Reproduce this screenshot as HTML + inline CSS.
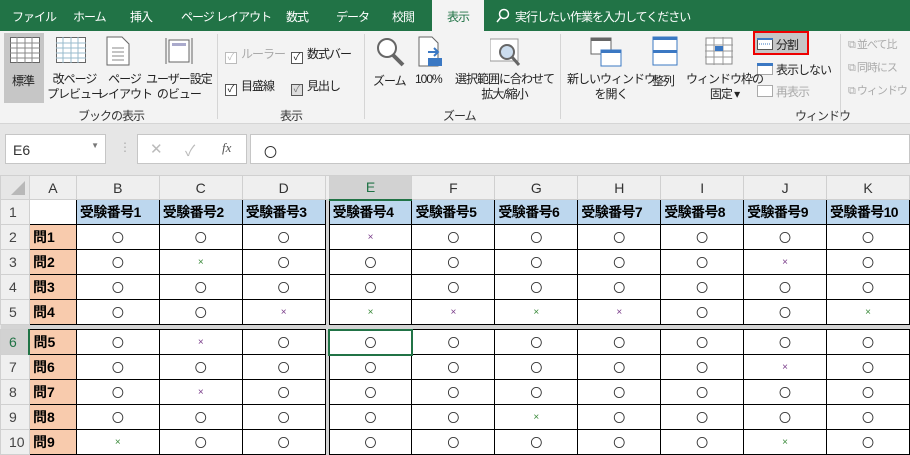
<!DOCTYPE html>
<html><head><meta charset="utf-8"><style>
*{margin:0;padding:0;box-sizing:border-box}
body{width:910px;height:454px;overflow:hidden;background:#e6e6e6;font-family:"Liberation Sans","Noto Sans CJK JP",sans-serif;position:relative}
.a{position:absolute;white-space:nowrap}
#tabs{left:0;top:0;width:910px;height:31px;background:#217346;color:#fff;font-size:12px;letter-spacing:-1px}
#tabs span{position:absolute;top:8px}
#rib{left:0;top:31px;width:910px;height:93px;background:#f3f3f3;border-bottom:1px solid #d5d5d5;font-size:12px;color:#222;letter-spacing:-1px}
.sep{position:absolute;top:3px;width:1px;height:85px;background:#d5d5d5}
.grp{position:absolute;top:76px;font-size:12px;color:#333}
.cb{display:inline-block;width:12px;height:12px;border:1px solid #555;background:#fff;vertical-align:-2px;margin-right:4px;font-size:10px;line-height:10px;text-align:center;letter-spacing:0}
table{position:absolute;left:0;top:175px;border-collapse:collapse;table-layout:fixed;font-size:12px;color:#333}
td{height:25px;border:1px solid #000;text-align:center;padding:0;overflow:hidden;white-space:nowrap;background:#fff}
tr.h td{height:24px;background:#efefef;border:1px solid #d0d0d0;color:#333;font-size:14px}
td.r{background:#efefef;border:1px solid #d0d0d0;color:#444;font-size:14px;text-align:left;padding-left:8px}
td.b{background:#bdd7ee;font-weight:bold;font-size:14px;color:#000;letter-spacing:-0.6px;text-align:left;padding-left:3px}
td.q{background:#f8cbad;font-weight:bold;text-align:left;padding-left:3px;font-size:14px;color:#000}
td.s{background:#d4d4d4;border:none;padding:0}
tr.sp td{height:5px;background:#d4d4d4;border:none}
.x{color:#7a3d8a;font-size:10px}
.g{color:#3a8a3a;font-size:10px}
</style></head><body>
<div id="tabs" class="a">
<span style="left:12px">ファイル</span><span style="left:73px">ホーム</span><span style="left:130px">挿入</span><span style="left:181px">ページ レイアウト</span><span style="left:286px">数式</span><span style="left:336px">データ</span><span style="left:392px">校閲</span>
<div class="a" style="left:432px;top:0;width:52px;height:31px;background:#f3f3f3;color:#217346;text-align:center;padding-top:8px">表示</div>
<svg class="a" style="left:496px;top:8px" width="14" height="16"><circle cx="8" cy="6" r="4.5" fill="none" stroke="#fff" stroke-width="1.5"/><path d="M5 9L1 14" stroke="#fff" stroke-width="1.5"/></svg><span style="left:515px">実行したい作業を入力してください</span>
</div>
<div id="rib" class="a">
<div class="a" style="left:4px;top:2px;width:40px;height:70px;background:#c6c6c6"></div>
<svg class="a" style="left:10px;top:6px" width="30" height="26"><rect x="0.5" y="0.5" width="29" height="25" fill="#fff" stroke="#666"/><path d="M0 6H30M0 11H30M0 16H30M0 21H30M7 0V26M15 0V26M22 0V26" stroke="#888"/></svg>
<svg class="a" style="left:56px;top:6px" width="30" height="26"><rect x="0.5" y="0.5" width="29" height="25" fill="#fff" stroke="#666"/><path d="M0 6H30M0 11H30M0 16H30M0 21H30M7 0V26M15 0V26M22 0V26" stroke="#9bc"/></svg>
<svg class="a" style="left:106px;top:5px" width="24" height="30"><path d="M1 1H16L23 8V29H1Z" fill="#fff" stroke="#666"/><path d="M6 12H18M6 16H18M6 20H18M6 24H18" stroke="#888"/></svg>
<svg class="a" style="left:164px;top:5px" width="30" height="30"><rect x="5" y="4" width="20" height="22" fill="#fff" stroke="#666"/><rect x="8" y="7" width="14" height="3" fill="#aac"/><path d="M2 2V28M28 2V28" stroke="#666"/></svg>
<div class="a" style="left:12px;top:41px">標準</div>
<div class="a" style="left:47px;top:41px;line-height:15px;text-align:center">改ページ<br>プレビュー</div>
<div class="a" style="left:97px;top:41px;line-height:15px;text-align:center">ページ<br>レイアウト</div>
<div class="a" style="left:146px;top:41px;line-height:15px;text-align:center">ユーザー設定<br>のビュー</div>
<div class="grp" style="left:78px">ブックの表示</div>
<div class="sep" style="left:217px"></div>
<div class="a" style="left:225px;top:14px;color:#aaa"><span class="cb" style="border-color:#bbb;color:#bbb">✓</span>ルーラー</div>
<div class="a" style="left:291px;top:14px"><span class="cb">✓</span>数式バー</div>
<div class="a" style="left:225px;top:46px"><span class="cb">✓</span>目盛線</div>
<div class="a" style="left:291px;top:46px"><span class="cb" style="background:#ddd;color:#777">✓</span>見出し</div>
<div class="grp" style="left:280px">表示</div>
<div class="sep" style="left:364px"></div>
<svg class="a" style="left:375px;top:6px" width="30" height="30"><circle cx="12" cy="11" r="9" fill="#fff" stroke="#666" stroke-width="2"/><path d="M18 18L28 28" stroke="#666" stroke-width="4"/></svg>
<svg class="a" style="left:418px;top:5px" width="28" height="32"><path d="M1 1H14L20 7V30H1Z" fill="#fff" stroke="#666"/><path d="M10 16H20M16 12L20 16L16 20" stroke="#3b78c3" stroke-width="2" fill="none"/><rect x="10" y="22" width="14" height="8" fill="#3b78c3"/></svg>
<div class="a" style="left:373px;top:41px">ズーム</div>
<div class="a" style="left:415px;top:41px">100%</div>
<svg class="a" style="left:490px;top:6px" width="32" height="30"><rect x="0" y="2" width="28" height="22" fill="#fff" stroke="#999"/><circle cx="17" cy="15" r="7" fill="#cde" stroke="#666" stroke-width="2"/><path d="M22 20L29 28" stroke="#666" stroke-width="3"/></svg>
<div class="a" style="left:455px;top:41px;line-height:15px;text-align:center">選択範囲に合わせて<br>拡大/縮小</div>
<div class="grp" style="left:443px">ズーム</div>
<div class="sep" style="left:560px"></div>
<svg class="a" style="left:590px;top:6px" width="32" height="30"><rect x="1" y="1" width="20" height="16" fill="#fff" stroke="#666"/><rect x="1" y="1" width="20" height="3" fill="#666"/><rect x="11" y="13" width="20" height="16" fill="#fff" stroke="#3b78c3"/><rect x="11" y="13" width="20" height="3" fill="#3b78c3"/></svg>
<div class="a" style="left:567px;top:41px;line-height:15px;text-align:center">新しいウィンドウ<br>を開く</div>
<svg class="a" style="left:652px;top:5px" width="26" height="30"><rect x="1" y="1" width="24" height="28" fill="#fff" stroke="#3b78c3"/><rect x="1" y="1" width="24" height="3" fill="#3b78c3"/><rect x="1" y="14" width="24" height="3" fill="#3b78c3"/></svg>
<div class="a" style="left:652px;top:41px">整列</div>
<svg class="a" style="left:705px;top:6px" width="28" height="28"><rect x="1" y="1" width="26" height="26" fill="#fff" stroke="#888"/><path d="M0 8H28M0 14H28M0 20H28M9 0V28M18 0V28" stroke="#999"/><rect x="10" y="9" width="8" height="5" fill="#3b78c3"/></svg>
<div class="a" style="left:686px;top:41px;line-height:15px;text-align:center">ウィンドウ枠の<br>固定 ▾</div>
<div class="a" style="left:753px;top:0px;width:56px;height:24px;border:2px solid #e00;background:#c6c6c6"></div>
<svg class="a" style="left:757px;top:7px" width="16" height="12"><rect x="0.5" y="0.5" width="15" height="11" fill="#fff" stroke="#555"/><rect x="0" y="0" width="16" height="2" fill="#3b78c3"/><path d="M2 6H14" stroke="#3b78c3" stroke-dasharray="1 1"/></svg>
<div class="a" style="left:776px;top:5px">分割</div>
<svg class="a" style="left:757px;top:32px" width="16" height="12"><rect x="0.5" y="0.5" width="15" height="11" fill="#fff" stroke="#555" stroke-dasharray="1 1"/><rect x="0" y="0" width="16" height="3" fill="#3b78c3"/></svg>
<div class="a" style="left:776px;top:30px">表示しない</div>
<svg class="a" style="left:757px;top:54px" width="16" height="12"><rect x="0.5" y="0.5" width="15" height="11" fill="#fff" stroke="#aaa"/></svg>
<div class="a" style="left:776px;top:52px;color:#aaa">再表示</div>
<div class="grp" style="left:795px">ウィンドウ</div>
<div class="sep" style="left:840px"></div>
<div class="a" style="left:848px;top:5px;color:#aaa;font-size:11px">⧉ 並べて比</div>
<div class="a" style="left:848px;top:28px;color:#aaa;font-size:11px">⧉ 同時にス</div>
<div class="a" style="left:848px;top:51px;color:#aaa;font-size:11px">⧉ ウィンドウ</div>
</div>
<div class="a" style="left:5px;top:134px;width:101px;height:30px;background:#fff;border:1px solid #c6c6c6;font-size:14px;padding:7px 0 0 7px;color:#333">E6<span style="position:absolute;right:6px;top:6px;font-size:8px;color:#777">▼</span></div>
<div class="a" style="left:119px;top:140px;color:#aaa;font-size:12px">⋮</div>
<div class="a" style="left:137px;top:134px;width:110px;height:30px;background:#fff;border:1px solid #c6c6c6;color:#bbb;font-size:15px;padding-top:5px"><span style="position:absolute;left:12px">✕</span><span style="position:absolute;left:47px">✓</span><span style="position:absolute;left:84px;color:#555;font-style:italic;font-family:'Liberation Serif',serif;font-size:13px">fx</span></div>
<div class="a" style="left:250px;top:134px;width:660px;height:30px;background:#fff;border:1px solid #c6c6c6;font-size:13px;padding:7px 0 0 13px;color:#333">〇</div>
<table>
<colgroup><col style="width:29px"><col style="width:47px"><col style="width:83px"><col style="width:83px"><col style="width:83px"><col style="width:4px"><col style="width:83px"><col style="width:83px"><col style="width:83px"><col style="width:83px"><col style="width:83px"><col style="width:83px"><col style="width:83px"></colgroup>
<tr class="h"><td style="background:#e6e6e6"><svg width="20" height="18" style="display:block;margin-left:6px"><path d="M18 2V16H4Z" fill="#b8b8b8"/></svg></td><td>A</td><td>B</td><td>C</td><td>D</td><td class="s"></td><td style="background:#d2d2d2;color:#217346;border-bottom:2px solid #217346">E</td><td>F</td><td>G</td><td>H</td><td>I</td><td>J</td><td>K</td></tr>
<tr><td class="r">1</td><td></td><td class="b">受験番号1</td><td class="b">受験番号2</td><td class="b">受験番号3</td><td class="s"></td><td class="b">受験番号4</td><td class="b">受験番号5</td><td class="b">受験番号6</td><td class="b">受験番号7</td><td class="b">受験番号8</td><td class="b">受験番号9</td><td class="b">受験番号10</td></tr>
<tr><td class="r">2</td><td class="q">問1</td><td>〇</td><td>〇</td><td>〇</td><td class="s"></td><td class="x">×</td><td>〇</td><td>〇</td><td>〇</td><td>〇</td><td>〇</td><td>〇</td></tr>
<tr><td class="r">3</td><td class="q">問2</td><td>〇</td><td class="g">×</td><td>〇</td><td class="s"></td><td>〇</td><td>〇</td><td>〇</td><td>〇</td><td>〇</td><td class="x">×</td><td>〇</td></tr>
<tr><td class="r">4</td><td class="q">問3</td><td>〇</td><td>〇</td><td>〇</td><td class="s"></td><td>〇</td><td>〇</td><td>〇</td><td>〇</td><td>〇</td><td>〇</td><td>〇</td></tr>
<tr><td class="r">5</td><td class="q">問4</td><td>〇</td><td>〇</td><td class="x">×</td><td class="s"></td><td class="g">×</td><td class="x">×</td><td class="g">×</td><td class="x">×</td><td>〇</td><td>〇</td><td class="g">×</td></tr>
<tr class="sp"><td colspan="13"></td></tr>
<tr><td class="r" style="background:#d2d2d2;color:#217346;border-right:2px solid #217346">6</td><td class="q">問5</td><td>〇</td><td class="x">×</td><td>〇</td><td class="s"></td><td style="border:2px solid #217346">〇</td><td>〇</td><td>〇</td><td>〇</td><td>〇</td><td>〇</td><td>〇</td></tr>
<tr><td class="r">7</td><td class="q">問6</td><td>〇</td><td>〇</td><td>〇</td><td class="s"></td><td>〇</td><td>〇</td><td>〇</td><td>〇</td><td>〇</td><td class="x">×</td><td>〇</td></tr>
<tr><td class="r">8</td><td class="q">問7</td><td>〇</td><td class="x">×</td><td>〇</td><td class="s"></td><td>〇</td><td>〇</td><td>〇</td><td>〇</td><td>〇</td><td>〇</td><td>〇</td></tr>
<tr><td class="r">9</td><td class="q">問8</td><td>〇</td><td>〇</td><td>〇</td><td class="s"></td><td>〇</td><td>〇</td><td class="g">×</td><td>〇</td><td>〇</td><td>〇</td><td>〇</td></tr>
<tr><td class="r">10</td><td class="q">問9</td><td class="g">×</td><td>〇</td><td>〇</td><td class="s"></td><td>〇</td><td>〇</td><td>〇</td><td>〇</td><td>〇</td><td class="g">×</td><td>〇</td></tr>
</table>
</body></html>
